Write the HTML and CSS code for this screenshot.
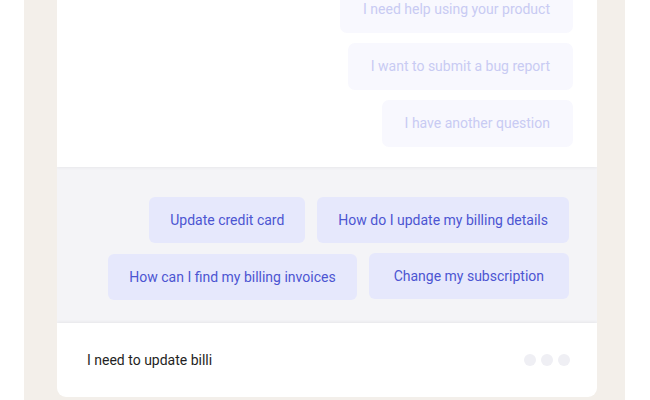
FILE: index.html
```html
<!DOCTYPE html>
<html lang="en">
<head>
    <meta charset="UTF-8">
    <meta name="viewport" content="width=device-width, initial-scale=1.0">
    <title>Support Chat</title>
    <link rel="stylesheet" href="styles.css">
</head>
<body>
    <div class="frame">
        <div class="chat">
            <!-- Earlier answers, faded -->
            <div class="history">
                <div class="bubble">I need help using your product</div>
                <div class="bubble">I want to submit a bug report</div>
                <div class="bubble">I have another question</div>
            </div>

            <!-- Suggested replies -->
            <div class="suggestions">
                <div class="chip-row">
                    <button class="chip">Update credit card</button>
                    <button class="chip">How do I update my billing details</button>
                </div>
                <div class="chip-row">
                    <button class="chip">How can I find my billing invoices</button>
                    <button class="chip wide">Change my subscription</button>
                </div>
            </div>

            <div class="composer">
                <span class="typed">I need to update billi</span>
                <div class="typing">
                    <span class="dot"></span>
                    <span class="dot"></span>
                    <span class="dot"></span>
                </div>
            </div>
        </div>
    </div>
</body>
</html>
```

FILE: styles.css
```css
body {
    margin: 0;
    background-color: #fff;
    font-family: Roboto, "Liberation Sans", sans-serif;
    height: 400px;
    overflow: hidden;
}

.frame {
    margin-left: 24px;
    width: 601px;
    height: 400px;
    padding: 0 28px 0 33px;
    box-sizing: border-box;
    background-color: #f3efea;
}

.chat {
    height: 397px;
    background-color: #fff;
    border-radius: 0 0 9px 9px;
    overflow: hidden;
    display: flex;
    flex-direction: column;
}

.history {
    height: 181px;
    flex-shrink: 0;
    box-sizing: border-box;
    display: flex;
    flex-direction: column;
    align-items: flex-end;
    gap: 10px;
    padding-right: 24px;
    margin-top: -14px;
    box-shadow: 0 1px 3px rgba(0, 0, 0, 0.05);
    position: relative;
    z-index: 1;
}

.bubble {
    padding: 0 23px;
    height: 47px;
    line-height: 47px;
    border-radius: 7px;
    background-color: #f8f8fe;
    color: #c8cbf3;
    font-size: 14px;
}

.suggestions {
    height: 156px;
    flex-shrink: 0;
    box-sizing: border-box;
    background-color: #f4f4f7;
    padding: 30px 28px 0 0;
    display: flex;
    flex-direction: column;
    gap: 11px;
}

.chip-row {
    display: flex;
    justify-content: flex-end;
    align-items: flex-start;
    gap: 12px;
}

.chip {
    height: 46px;
    padding: 0 21px;
    border: none;
    border-radius: 6px;
    background-color: #e6e8fc;
    color: #4c55d2;
    font-family: inherit;
    font-size: 14px;
}

.chip.wide {
    padding: 0 25px;
    margin-top: -1px;
}

.composer {
    flex: 1;
    display: flex;
    align-items: center;
    justify-content: space-between;
    padding: 0 27px 0 30px;
    box-shadow: 0 -1px 3px rgba(0, 0, 0, 0.06);
    position: relative;
}

.typed {
    font-size: 14px;
    color: #1f1f24;
}

.typing {
    display: flex;
    gap: 5px;
}

.dot {
    width: 12px;
    height: 12px;
    border-radius: 50%;
    background-color: #efeff4;
}
```
